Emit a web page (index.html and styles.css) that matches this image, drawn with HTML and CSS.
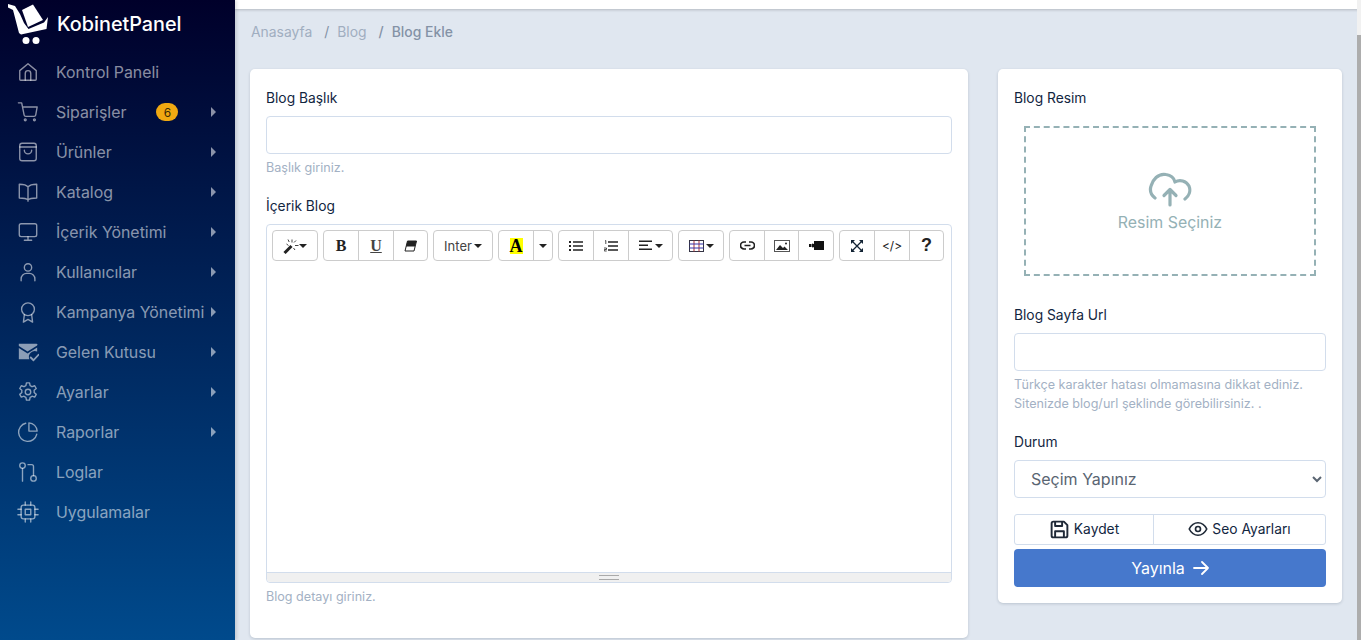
FILE: index.html
```html
<!DOCTYPE html>
<html lang="tr">
<head>
<meta charset="utf-8">
<title>KobinetPanel - Blog Ekle</title>
<link rel="stylesheet" href="styles.css">
</head>
<body>
<div class="app">
  <aside class="sidebar">
    <div class="brand">
      <svg class="brand-logo" viewBox="0 0 49 46" width="49" height="46" fill="#fff">
        <path d="M8 4 L15 6 L20 14 L24 23 L28.500 29 L44 22.500 L48 17 L46.500 29 L21 34.500 L19 33 L13 10 L8 7.500 Z"/>
        <path d="M22 10 L33 4.500 L43 20 L28 27 Z"/>
        <circle cx="26" cy="40.500" r="3.500"/><circle cx="36" cy="40.500" r="3.500"/>
      </svg>
      <span class="brand-name">KobinetPanel</span>
    </div>
    <nav class="menu">
      <a class="menu-item"><svg class="mi" viewBox="0 0 24 24"><path d="M3 10.500 12 3l9 7.500V20a1 1 0 0 1-1 1H4a1 1 0 0 1-1-1Z"/><path d="M9 21v-7.500a3 3 0 0 1 6 0V21"/></svg><span class="ml">Kontrol Paneli</span></a>
      <a class="menu-item"><svg class="mi" viewBox="0 0 24 24"><circle cx="9" cy="20.500" r="1"/><circle cx="19" cy="20.500" r="1"/><path d="M1.500 2h3.600l2.700 13.400a1.800 1.800 0 0 0 1.800 1.400h9a1.800 1.800 0 0 0 1.800-1.400L22 6.500H6"/></svg><span class="ml">Siparişler</span><span class="badge">6</span><i class="caret"></i></a>
      <a class="menu-item"><svg class="mi" viewBox="0 0 24 24"><rect x="3" y="2.500" width="18" height="19" rx="2.500"/><path d="M3 6.500h18M8 10a4 4 0 0 0 8 0"/></svg><span class="ml">Ürünler</span><i class="caret"></i></a>
      <a class="menu-item"><svg class="mi" viewBox="0 0 24 24"><path d="M12 6.500C10.500 4.500 8 3.500 2.500 3.500V18.500C8 18.500 10.500 19 12 20.500C13.500 19 16 18.500 21.500 18.500V3.500C16 3.500 13.500 4.500 12 6.500ZM12 6.500V22"/></svg><span class="ml">Katalog</span><i class="caret"></i></a>
      <a class="menu-item"><svg class="mi" viewBox="0 0 24 24"><rect x="2.500" y="3" width="19" height="14" rx="2"/><path d="M12 17v4M8 21h8"/></svg><span class="ml">İçerik Yönetimi</span><i class="caret"></i></a>
      <a class="menu-item"><svg class="mi" viewBox="0 0 24 24"><circle cx="12" cy="7" r="4"/><path d="M4.500 21.500v-2a6 6 0 0 1 6-6h3a6 6 0 0 1 6 6v2"/></svg><span class="ml">Kullanıcılar</span><i class="caret"></i></a>
      <a class="menu-item"><svg class="mi" viewBox="0 0 24 24"><circle cx="12" cy="9" r="7"/><path d="M8 15l-1 8 5-3 5 3-1-8"/></svg><span class="ml">Kampanya Yönetimi</span><i class="caret"></i></a>
      <a class="menu-item"><svg class="mi mi-solid" viewBox="0 0 24 24"><path d="M2 3h19.500a.5.500 0 0 1 .5.500V5l-10.500 6.500L2 5.500Z"/><path d="M2 7.500l9.500 6L22 7v4.500a6.500 6.500 0 0 0-8.500 8.500H2Z"/><path class="mi-check" d="M15 18l3 3 5.500-6"/></svg><span class="ml">Gelen Kutusu</span><i class="caret"></i></a>
      <a class="menu-item"><svg class="mi" viewBox="0 0 24 24"><circle cx="12" cy="12" r="3"/><path d="M10.300 2h3.400l.6 3a7.500 7.500 0 0 1 2.100 1.200l2.900-1 1.700 3-2.300 2a7.500 7.500 0 0 1 0 2.400l2.300 2-1.700 3-2.900-1a7.500 7.500 0 0 1-2.100 1.200l-.6 3h-3.400l-.6-3a7.500 7.500 0 0 1-2.100-1.200l-2.900 1-1.700-3 2.300-2a7.500 7.500 0 0 1 0-2.400l-2.300-2 1.700-3 2.900 1a7.500 7.500 0 0 1 2.100-1.200Z"/></svg><span class="ml">Ayarlar</span><i class="caret"></i></a>
      <a class="menu-item"><svg class="mi" viewBox="0 0 24 24"><path d="M21.500 14.500A10 10 0 1 1 9.500 2.500"/><path d="M13 2a9.500 9.500 0 0 1 9 9h-9Z"/></svg><span class="ml">Raporlar</span><i class="caret"></i></a>
      <a class="menu-item"><svg class="mi" viewBox="0 0 24 24"><circle cx="6" cy="5" r="3"/><circle cx="18" cy="19" r="3"/><path d="M6 8v14M12 4h4a2 2 0 0 1 2 2v10"/></svg><span class="ml">Loglar</span></a>
      <a class="menu-item"><svg class="mi" viewBox="0 0 24 24"><rect x="4.500" y="4.500" width="15" height="15" rx="2.500"/><rect x="9" y="9" width="6" height="6"/><path d="M9 1v3.500M15 1v3.500M9 19.500V23M15 19.500V23M1 9h3.500M1 15h3.500M19.500 9H23M19.500 15H23"/></svg><span class="ml">Uygulamalar</span></a>
    </nav>
  </aside>

  <main class="content">
    <div class="topbar"></div>
    <ol class="crumbs">
      <li class="crumb">Anasayfa</li>
      <li class="crumb">Blog</li>
      <li class="crumb current">Blog Ekle</li>
    </ol>
    <div class="columns">
      <section class="card card-main">
        <label class="field-label">Blog Başlık</label>
        <input class="input" type="text">
        <p class="hint">Başlık giriniz.</p>
        <label class="field-label label-editor">İçerik Blog</label>
        <div class="editor">
          <div class="toolbar">
            <div class="tgroup"><button class="tb tb-magic"><svg width="16" height="16" viewBox="0 0 16 16"><path d="M1.500 15 8.500 8" stroke="#222" stroke-width="3" fill="none"/><path d="M9 1.500v3M12 7.500h3.500M3.500 6l2 1.500M13 2.500 11 4.500M12 12l-1.500-2M5 1.500l1.200 2.500" stroke="#444" stroke-width="1" fill="none"/></svg><i class="tcaret"></i></button></div>
            <div class="tgroup">
              <button class="tb tb-b">B</button>
              <button class="tb tb-u">U</button>
              <button class="tb tb-e"><svg width="13" height="12" viewBox="0 0 13 12"><path d="M3.500 1H12.500L10 11H1Z" fill="none" stroke="#222"/><path d="M3.500 1H12.500L11 6.500H2Z" fill="#222"/></svg></button>
            </div>
            <div class="tgroup"><button class="tb tb-font">Inter<i class="tcaret"></i></button></div>
            <div class="tgroup">
              <button class="tb tb-color"><span class="hilite">A</span></button>
              <button class="tb tb-more"><i class="tcaret"></i></button>
            </div>
            <div class="tgroup">
              <button class="tb tb-list"><svg width="14" height="12" viewBox="0 0 14 12"><path d="M0 1h2v2H0zM0 5h2v2H0zM0 9h2v2H0zM4 1.300h10v1.500H4zM4 5.300h10v1.500H4zM4 9.300h10v1.500H4z" fill="#222"/></svg></button>
              <button class="tb tb-list2"><svg width="14" height="12" viewBox="0 0 14 12"><path d="M4 1.300h10v1.500H4zM4 5.300h10v1.500H4zM4 9.300h10v1.500H4z" fill="#222"/><path d="M1 1l.8-.5v3.500M0 8h2.500v1.500H.3V11h2.400" fill="none" stroke="#222" stroke-width=".8"/></svg></button>
              <button class="tb tb-align"><svg width="14" height="11" viewBox="0 0 14 11"><path d="M0 .5h13v1.500H0zM0 4.500h9v1.500H0zM0 8.500h13v1.500H0z" fill="#222"/></svg><i class="tcaret"></i></button>
            </div>
            <div class="tgroup"><button class="tb tb-table"><svg width="15" height="12" viewBox="0 0 15 12"><rect x=".5" y=".5" width="14" height="11" fill="none" stroke="#334"/><path d="M5 .5v11M10 .5v11" stroke="#a33"/><path d="M.5 4h14M.5 8h14" stroke="#33a"/></svg><i class="tcaret"></i></button></div>
            <div class="tgroup">
              <button class="tb tb-link"><svg width="15" height="9" viewBox="0 0 15 9"><path d="M6 1H4a3.500 3.500 0 0 0 0 7h2M9 1h2a3.500 3.500 0 0 1 0 7H9M4.500 4.500h6" fill="none" stroke="#222" stroke-width="1.700"/></svg></button>
              <button class="tb tb-pic"><svg width="16" height="12" viewBox="0 0 16 12"><rect x=".5" y=".5" width="15" height="11" fill="none" stroke="#555"/><path d="M2 10l4-5 3 3 1.500-1.500L14 10Z" fill="#222"/><circle cx="12" cy="3.500" r="1" fill="#222"/></svg></button>
              <button class="tb tb-video"><svg width="15" height="9" viewBox="0 0 15 9"><path d="M5 0h10v9H5zM0 3h2.500v3H0zM3 2.500l2 .5v3l-2 .5z" fill="#111"/></svg></button>
            </div>
            <div class="tgroup">
              <button class="tb tb-full"><svg width="12" height="12" viewBox="0 0 12 12"><path d="M1 1l10 10M11 1 1 11" stroke="#123" stroke-width="1.300"/><path d="M0 0h4L0 4zM12 0H8l4 4zM0 12h4L0 8zM12 12H8l4-4z" fill="#123"/></svg></button>
              <button class="tb tb-code">&lt;/&gt;</button>
              <button class="tb tb-help">?</button>
            </div>
          </div>
          <div class="editable"></div>
          <div class="resizer"><span class="grip"></span></div>
        </div>
        <p class="hint">Blog detayı giriniz.</p>
      </section>

      <aside class="card card-side">
        <label class="field-label">Blog Resim</label>
        <div class="dropzone">
          <svg class="upload" width="44" height="36" viewBox="0 0 44 36" fill="none" stroke="#95b1b5" stroke-width="3.200" stroke-linecap="round" stroke-linejoin="round">
            <path d="M7 27C3 24 1.500 20 3 15 4.500 9 10 2 18 3.500 22.500 4 26 7 27 11 32 8 38 10 41 15 43 20 41 25 37 28"/>
            <path d="M22 34V19M16 24.500l6-6 6 6"/>
          </svg>
          <span class="drop-text">Resim Seçiniz</span>
        </div>
        <label class="field-label label-url">Blog Sayfa Url</label>
        <input class="input" type="text">
        <p class="hint">Türkçe karakter hatası olmamasına dikkat ediniz.<br>Sitenizde blog/url şeklinde görebilirsiniz. .</p>
        <label class="field-label label-status">Durum</label>
        <select class="select"><option>Seçim Yapınız</option></select>
        <div class="btn-pair">
          <button class="btn-light btn-save"><svg width="21" height="21" viewBox="0 0 24 24" fill="none" stroke="#1f2937" stroke-width="2.200" stroke-linejoin="round"><path d="M3 5a2 2 0 0 1 2-2h12l4 4v12a2 2 0 0 1-2 2H5a2 2 0 0 1-2-2Z"/><path d="M7 21v-7h10v7M7 3v5h8V3"/></svg>Kaydet</button>
          <button class="btn-light btn-seo"><svg width="20" height="16" viewBox="0 0 24 18" fill="none" stroke="#1f2937" stroke-width="2"><path d="M1.500 9C4 4 7.500 1.500 12 1.500S20 4 22.500 9C20 14 16.500 16.500 12 16.500S4 14 1.500 9Z"/><circle cx="12" cy="9" r="3"/></svg>Seo Ayarları</button>
        </div>
        <button class="btn-primary">Yayınla<svg width="16" height="14" viewBox="0 0 16 14" fill="none" stroke="#fff" stroke-width="1.800" stroke-linecap="round" stroke-linejoin="round"><path d="M1 7h14M9 1l6 6-6 6"/></svg></button>
      </aside>
    </div>
  </main>
</div>
</body>
</html>
```
FILE: styles.css
```css
* { box-sizing: border-box; }
html, body { margin: 0; height: 640px; overflow: hidden; }
body { font-family: Inter, "Liberation Sans", sans-serif; background: #e0e7f0; color: #12263f; }
button, input, select { font-family: inherit; }

.app { display: flex; height: 640px; }

/* Sidebar */
.sidebar {
  width: 235px; flex: none; height: 640px;
  background: linear-gradient(180deg, #00002a 0%, #004a8c 100%);
  box-shadow: 2px 0 3px rgba(0,0,0,.12);
  position: relative; z-index: 2;
}
.brand { display: flex; align-items: center; height: 46px; }
.brand-logo { flex: none; margin-right: 8px; }
.brand-name { color: #fff; font-size: 19.800px; font-weight: 500; padding-top: 2px; }
.menu { display: flex; flex-direction: column; padding-top: 6px; }
.menu-item { display: flex; align-items: center; height: 40px; padding-left: 17px; color: rgba(255,255,255,.55); font-size: 15.900px; }
.mi { width: 22px; height: 22px; flex: none; fill: none; stroke: rgba(255,255,255,.55); stroke-width: 1.500; stroke-linecap: round; stroke-linejoin: round; margin-right: 17px; }
.mi-solid { fill: rgba(255,255,255,.55); stroke: none; }
.mi-check { fill: none; stroke: rgba(255,255,255,.55); stroke-width: 2; }
.ml { white-space: nowrap; }
.badge { background: #f0a911; color: #3a2b05; font-size: 12px; width: 22px; height: 18px; border-radius: 9px; display: flex; align-items: center; justify-content: center; margin-left: 30px; }
.caret { width: 0; height: 0; border-left: 5px solid rgba(255,255,255,.55); border-top: 5px solid transparent; border-bottom: 5px solid transparent; margin-left: auto; margin-right: 19px; }

/* Main area */
.content { flex: 1; min-width: 0; position: relative; }
.content::before { content: ""; position: absolute; right: 0; top: 0; height: 35px; width: 4px; background: #f1f1f1; z-index: 1; }
.content::after { content: ""; position: absolute; right: 0; top: 35px; bottom: 0; width: 4px; background: #adadad; }
.topbar { height: 9px; background: #fff; box-shadow: 0 1px 3px rgba(0,0,0,.2); }
.crumbs { list-style: none; margin: 0; padding: 14px 16px 0; display: flex; font-size: 13.900px; line-height: 18px; color: #a0aec0; }
.crumb + .crumb::before { content: "/"; margin: 0 8px 0 12px; color: #8492a6; }
.current { color: #8492a6; font-weight: 500; }
.columns { display: flex; align-items: flex-start; gap: 30px; padding: 28px 19px 0 15px; }
.card { background: #fff; border-radius: 5px; box-shadow: 0 1px 3px rgba(18,38,63,.18); padding: 20px 16px; }
.card-main { width: 718px; height: 569px; }
.card-side { width: 344px; height: 534px; }

/* Form fields */
.field-label { display: block; font-size: 13.800px; line-height: 18px; color: #12263f; }
.input { display: block; width: 100%; height: 38px; margin-top: 9px; border: 1px solid #d2ddec; border-radius: 4px; background: #fff; }
.hint { margin: 3.800px 0 0; font-size: 12.600px; line-height: 19.200px; color: #a3b1c4; }
.label-editor { margin-top: 20px; }
.label-url { margin-top: 30px; }
.label-status { margin-top: 19.700px; }

/* Rich text editor */
.editor { margin-top: 9px; border: 1px solid #d2ddec; border-radius: 4px; height: 359px; display: flex; flex-direction: column; }
.toolbar { display: flex; gap: 5px; padding: 5px 5px 0; height: 36px; flex: none; }
.tgroup { display: flex; height: 31px; border: 1px solid #ccc; border-radius: 4px; background: #fff; }
.tb { height: 29px; border: 0; border-left: 1px solid #ccc; background: none; padding: 0; display: flex; align-items: center; justify-content: center; gap: 2px; color: #222; font-size: 13px; }
.tb:first-child { border-left: 0; }
.tcaret { width: 0; height: 0; border-top: 4px solid #222; border-left: 4px solid transparent; border-right: 4px solid transparent; }
.tb-magic { width: 44px; gap: 0; }
.tb-b, .tb-u { width: 34px; font: bold 16px "Liberation Serif", serif; color: #222; }
.tb-u { width: 35px; text-decoration: underline; color: #444; }
.tb-e { width: 34px; }
.tb-font { width: 58px; color: #444; font-size: 13px; }
.tb-color { width: 34px; }
.hilite { background: #ff0; color: #000; font: bold 18px/16px "Liberation Serif", serif; width: 13px; height: 16px; text-align: center; }
.tb-more { width: 19px; }
.tb-list { width: 34px; }
.tb-list2 { width: 35px; }
.tb-align { width: 44px; }
.tb-table { width: 44px; }
.tb-link { width: 34px; }
.tb-pic { width: 34px; }
.tb-video { width: 35px; }
.tb-full { width: 34px; }
.tb-code { width: 35px; font-size: 12px; }
.tb-help { width: 34px; font: bold 18px "Liberation Sans", sans-serif; color: #222; }
.editable { flex: 1; }
.resizer { height: 10px; flex: none; background: #f0f0f0; border-top: 1px solid #d2ddec; display: flex; align-items: center; justify-content: center; border-radius: 0 0 4px 4px; }
.grip { width: 20px; height: 5px; border-top: 1px solid #aaa; border-bottom: 1px solid #aaa; position: relative; }

/* Image picker */
.dropzone { margin: 19px 10px 0; width: 292px; height: 150px; border: 2px dashed #95b1b5; display: flex; flex-direction: column; align-items: center; justify-content: center; }
.upload { margin-bottom: 6px; }
.drop-text { color: #95b1b5; font-size: 15.900px; line-height: 19px; }

.select { display: block; width: 100%; height: 38px; margin-top: 9px; border: 1px solid #d2ddec; border-radius: 4px; background: #fff; color: #5a6572; font-size: 16px; padding: 0 12px; }

/* Actions */
.btn-pair { display: flex; margin-top: 16px; border: 1px solid #d2ddec; border-radius: 3px; height: 31px; }
.btn-light { background: none; border: 0; display: flex; align-items: center; justify-content: center; gap: 4px; font-size: 13.800px; color: #12263f; padding: 0; }
.btn-save { width: 138px; flex: none; }
.btn-seo { flex: 1; border-left: 1px solid #d2ddec; }
.btn-primary { display: flex; align-items: center; justify-content: center; gap: 8px; width: 100%; height: 38px; margin-top: 4px; background: #4678cc; color: #fff; border: 0; border-radius: 4px; font-size: 16px; font-weight: 400; }
```
